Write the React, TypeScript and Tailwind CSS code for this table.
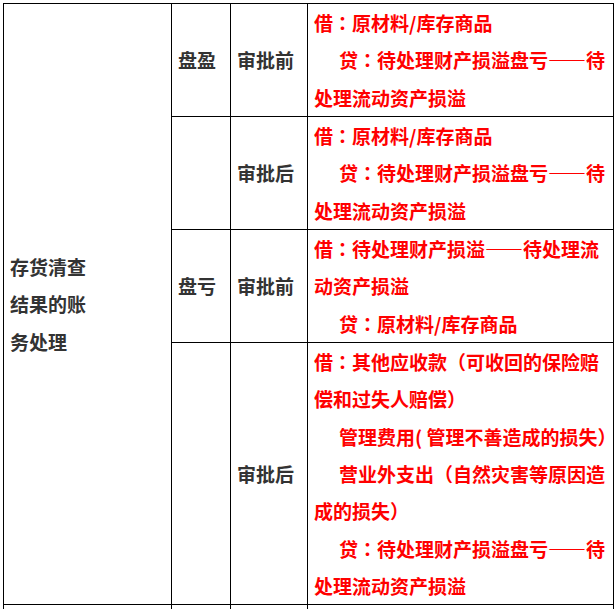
import React from 'react'

type Line = { text: string; indent?: boolean }

const rows: { side?: string; stage: string; lines: Line[] }[] = [
  {
    side: '盘盈',
    stage: '审批前',
    lines: [
      { text: '借：原材料/库存商品' },
      { text: '贷：待处理财产损溢盘亏——待', indent: true },
      { text: '处理流动资产损溢' },
    ],
  },
  {
    stage: '审批后',
    lines: [
      { text: '借：原材料/库存商品' },
      { text: '贷：待处理财产损溢盘亏——待', indent: true },
      { text: '处理流动资产损溢' },
    ],
  },
  {
    side: '盘亏',
    stage: '审批前',
    lines: [
      { text: '借：待处理财产损溢——待处理流' },
      { text: '动资产损溢' },
      { text: '贷：原材料/库存商品', indent: true },
    ],
  },
  {
    stage: '审批后',
    lines: [
      { text: '借：其他应收款（可收回的保险赔' },
      { text: '偿和过失人赔偿）' },
      { text: '管理费用( 管理不善造成的损失）', indent: true },
      { text: '营业外支出（自然灾害等原因造', indent: true },
      { text: '成的损失）' },
      { text: '贷：待处理财产损溢盘亏——待', indent: true },
      { text: '处理流动资产损溢' },
    ],
  },
]

// full-width colon and brackets sit centred in the reference, as in the TC cut
function Entry({ text }: { text: string }) {
  return (
    <>
      {text.split(/([：（）])/).map((part, k) =>
        /^[：（）]$/.test(part) ? (
          <span key={k} lang="zh-TW" className="font-['Noto_Sans_CJK_TC',sans-serif]">
            {part}
          </span>
        ) : (
          part
        )
      )}
    </>
  )
}

export default function App() {
  return (
    <div
      lang="zh-CN"
      className="min-h-screen bg-white pl-[3px] pt-[3px] font-['Noto_Sans_CJK_SC',sans-serif] text-[19px] font-bold leading-[37.33px]"
    >
      <table className="w-[610px] table-fixed border-collapse">
        <colgroup>
          <col className="w-[168px]" />
          <col className="w-[59px]" />
          <col className="w-[77px]" />
          <col className="w-[306px]" />
        </colgroup>
        <tbody>
          {rows.map((row, i) => (
            <tr key={i}>
              {i === 0 && (
                <td rowSpan={4} className="border border-black px-[6px] align-middle text-[#333]">
                  <div>存货清查</div>
                  <div>结果的账</div>
                  <div>务处理</div>
                </td>
              )}
              <td className="border border-black px-[6px] align-middle text-[#333]">
                {row.side}
              </td>
              <td className="border border-black px-[6px] align-middle text-[#333]">
                {row.stage}
              </td>
              <td className="border border-black px-[6px] align-top text-[#ff0000]">
                {row.lines.map((line, j) => (
                  <div key={j} className={`whitespace-nowrap ${line.indent ? 'pl-[25px]' : ''}`}>
                    <Entry text={line.text} />
                  </div>
                ))}
              </td>
            </tr>
          ))}
          <tr>
            <td className="h-[37px] border border-black" />
            <td className="border border-black" />
            <td className="border border-black" />
            <td className="border border-black" />
          </tr>
        </tbody>
      </table>
    </div>
  )
}
